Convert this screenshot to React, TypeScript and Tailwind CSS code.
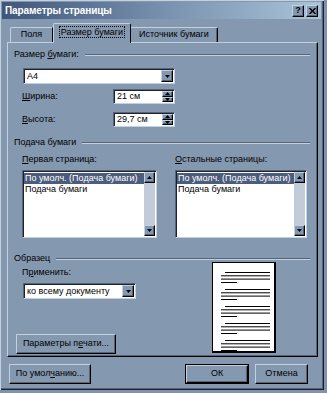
import React from 'react';

const raised =
  'border border-t-[#c3d0df] border-l-[#c3d0df] border-b-black border-r-black shadow-[inset_-1px_-1px_0_#56647a]';
const sunken =
  'border border-t-[#56647a] border-l-[#56647a] border-b-[#c3d0df] border-r-[#c3d0df] shadow-[inset_1px_1px_0_#1c232e]';

function U({ children }: { children: React.ReactNode }) {
  return <span className="underline underline-offset-[1px]">{children}</span>;
}

function Arrow({ up = false }: { up?: boolean }) {
  return (
    <svg width="5" height="3" viewBox="0 0 5 3">
      <polygon points={up ? '2.5,0 5,3 0,3' : '0,0 5,0 2.5,3'} fill="#000" />
    </svg>
  );
}

function GroupHeader({ label, lineFrom }: { label: React.ReactNode; lineFrom?: number }) {
  return (
    <div className="flex items-center h-[12px] pl-[6px] pr-[7px] gap-[6px]">
      <span className="whitespace-nowrap">{label}</span>
      <div className="flex-1 h-[2px] border-t border-t-[#56647a] border-b border-b-[#c3d0df]" />
    </div>
  );
}

function Select({ value, width }: { value: string; width: string }) {
  return (
    <div className={`${sunken} ${width} h-[16px] bg-white flex items-stretch p-[1px]`}>
      <span className="flex-1 pl-[2px] leading-[12px] text-black">{value}</span>
      <div className={`${raised} w-[12px] bg-[#8498b0] flex items-center justify-center`}>
        <Arrow />
      </div>
    </div>
  );
}

function Spin({ value }: { value: string }) {
  return (
    <div className={`${sunken} w-[62px] h-[15px] bg-white flex items-stretch p-[1px]`}>
      <span className="flex-1 pl-[2px] leading-[11px]">{value}</span>
      <div className="w-[11px] flex flex-col">
        <div className={`${raised} flex-1 bg-[#8498b0] flex items-center justify-center`}>
          <Arrow up />
        </div>
        <div className={`${raised} flex-1 bg-[#8498b0] flex items-center justify-center`}>
          <Arrow />
        </div>
      </div>
    </div>
  );
}

function ListBox({ width }: { width: string }) {
  return (
    <div className={`${sunken} ${width} h-[68px] bg-white flex p-[1px]`}>
      <div className="flex-1 flex flex-col pt-[1px]">
        <div className="h-[11px] bg-[#4c5c7c] text-white pl-[1px] leading-[11px] whitespace-nowrap">
          По умолч. (Подача бумаги)
        </div>
        <div className="h-[11px] pl-[1px] leading-[11px]">Подача бумаги</div>
      </div>
      <div className="w-[11px] bg-[#c2ccd9] flex flex-col justify-between">
        <div className={`${raised} h-[11px] bg-[#8498b0] flex items-center justify-center`}>
          <Arrow up />
        </div>
        <div className={`${raised} h-[11px] bg-[#8498b0] flex items-center justify-center`}>
          <Arrow />
        </div>
      </div>
    </div>
  );
}

function Button({ children, width, def = false }: { children: React.ReactNode; width: string; def?: boolean }) {
  return (
    <div
      className={`${width} h-[20px] bg-[#8498b0] flex items-center justify-center ${
        def ? 'border border-black' : ''
      }`}
    >
      <div className={`${raised} w-full h-full flex items-center justify-center`}>{children}</div>
    </div>
  );
}

function PagePreview() {
  const paras = [9, 26, 43, 60, 77];
  return (
    <div className="w-[64px] h-[91px] bg-white border-l border-t border-l-black border-t-black border-r-2 border-b-2 border-r-black border-b-black overflow-hidden">
      <svg width="61" height="88" viewBox="0 0 61 88">
        {paras.map((y) => (
          <g key={y} fill="#000">
            <rect x="12" y={y} width="45" height="1" />
            <rect x="8" y={y + 3.3} width="49" height="1" />
            <rect x="8" y={y + 6.6} width="49" height="1" />
            <rect x="8" y={y + 10} width="16" height="1" />
          </g>
        ))}
      </svg>
    </div>
  );
}

export default function App() {
  return (
    <div className="w-[327px] h-[393px] bg-[#7f93ab] font-['Liberation_Sans',Arial,sans-serif] text-[9px] text-black">
      <div className="w-[324px] h-[390px] bg-[#8498b0] p-[2px] flex flex-col shadow-[inset_1px_1px_0_#c3d0df,inset_-1px_-1px_0_#1c232e,inset_-2px_-2px_0_#56647a]">
        {/* title bar */}
        <div className="h-[17px] mr-[1px] flex items-center bg-gradient-to-r from-[#40577a] via-[#7890ad] to-[#aac4d9] pl-[3px] pr-[3px]">
          <span className="flex-1 text-white font-bold text-[10px] tracking-[-0.1px]">Параметры страницы</span>
          <div className="flex gap-[2px]">
            <div className={`${raised} w-[12px] h-[12px] bg-[#8498b0] flex items-center justify-center font-bold text-[9px] leading-none`}>
              ?
            </div>
            <div className={`${raised} w-[12px] h-[12px] bg-[#8498b0] flex items-center justify-center`}>
              <svg width="7" height="6" viewBox="0 0 7 6">
                <path d="M0.5 0 L6.5 6 M6.5 0 L0.5 6" stroke="#000" strokeWidth="1.4" />
              </svg>
            </div>
          </div>
        </div>

        {/* tabs */}
        <div className="mt-[4px] h-[19px] flex items-end pl-[8px] relative z-10">
          <div className="w-[43px] h-[15px] border-l border-t border-l-[#c3d0df] border-t-[#c3d0df] border-r border-r-black rounded-tl-[2px] flex items-center justify-center">
            Поля
          </div>
          <div className="w-[78px] h-[20px] -mb-[1px] bg-[#8498b0] border-l border-t border-l-[#c3d0df] border-t-[#c3d0df] border-r border-r-black rounded-tl-[2px] rounded-tr-[2px] flex items-start justify-center pt-[2px]">
            <span className="border border-dotted border-black px-[1px] leading-[10px]">Размер бумаги</span>
          </div>
          <div className="w-[87px] h-[15px] border-t border-t-[#c3d0df] border-r border-r-black shadow-[inset_-1px_0_0_#56647a] rounded-tr-[2px] flex items-center justify-center">
            Источник бумаги
          </div>
        </div>

        {/* panel */}
        <div className="ml-[5px] w-[311px] h-[315px] border-l border-t border-l-[#c3d0df] border-t-[#c3d0df] border-r border-b border-r-black border-b-black shadow-[inset_-1px_-1px_0_#56647a] flex flex-col">
          <div className="mt-[6px]">
            <GroupHeader
              label={
                <>
                  Размер <U>б</U>умаги:
                </>
              }
            />
          </div>
          <div className="mt-[7px] ml-[15px]">
            <Select value="A4" width="w-[152px]" />
          </div>
          <div className="mt-[5px] ml-[14px] flex items-center">
            <span className="w-[91px]">
              <U>Ш</U>ирина:
            </span>
            <Spin value="21 см" />
          </div>
          <div className="mt-[8px] ml-[14px] flex items-center">
            <span className="w-[91px]">
              <U>В</U>ысота:
            </span>
            <Spin value="29,7 см" />
          </div>

          <div className="mt-[10px]">
            <GroupHeader label="Подача бумаги" />
          </div>
          <div className="mt-[5px] ml-[14px] flex h-[12px] items-center">
            <span className="w-[153px]">
              <U>П</U>ервая страница:
            </span>
            <span>
              <U>О</U>стальные страницы:
            </span>
          </div>
          <div className="mt-[4px] ml-[14px] flex gap-[18px]">
            <ListBox width="w-[135px]" />
            <ListBox width="w-[132px]" />
          </div>

          <div className="mt-[15px]">
            <GroupHeader label="Образец" />
          </div>
          <div className="flex flex-1">
            <div className="flex flex-col w-[204px]">
              <div className="mt-[2px] ml-[14px] h-[12px] flex items-center">
                П<U>р</U>именить:
              </div>
              <div className="mt-[4px] ml-[15px]">
                <Select value="ко всему документу" width="w-[113px]" />
              </div>
              <div className="mt-[35px] ml-[8px]">
                <Button width="w-[100px]">
                  <span>
                    Параметры п<U>е</U>чати...
                  </span>
                </Button>
              </div>
            </div>
            <div className="-mt-[3px]">
              <PagePreview />
            </div>
          </div>
        </div>

        {/* bottom buttons */}
        <div className="mt-[7px] flex pl-[7px]">
          <Button width="w-[82px]">
            <span>
              По умол<U>ч</U>анию...
            </span>
          </Button>
          <div className="ml-[94px]">
            <Button width="w-[64px]" def>
              ОК
            </Button>
          </div>
          <div className="ml-[6px]">
            <Button width="w-[53px]">Отмена</Button>
          </div>
        </div>
      </div>
    </div>
  );
}
